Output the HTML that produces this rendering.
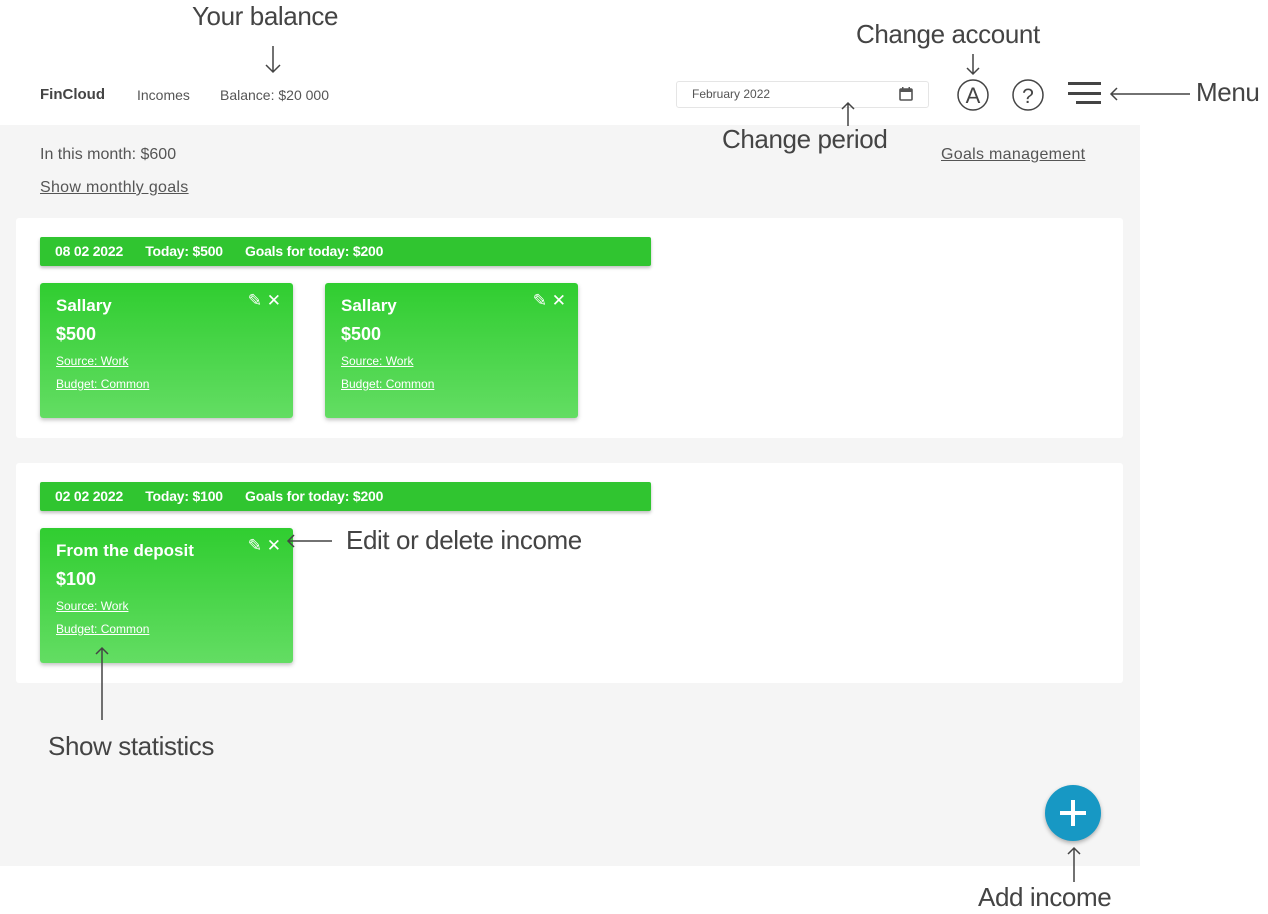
<!DOCTYPE html>
<html><head><style>
*{margin:0;padding:0;box-sizing:border-box}
body{width:1268px;height:914px;background:#fff;font-family:"Liberation Sans",sans-serif;color:#444;position:relative;overflow:hidden}
.a{position:absolute}
.gray{left:0;top:125px;width:1140px;height:741px;background:#f5f5f5}
.panel{background:#fff;left:16px;width:1107px;border-radius:3px}
.bar{left:40px;width:611px;height:29px;background:#30c530;border-radius:2px;box-shadow:0 2px 3px rgba(0,0,0,.25);color:#fff;font-weight:bold;font-size:14px;line-height:29px;padding-left:15px;white-space:pre;letter-spacing:-.2px}
.card{width:253px;height:135px;border-radius:3px;background:linear-gradient(#30cd30,#63dd63);box-shadow:0 2px 4px rgba(0,0,0,.25);color:#fff;padding:13px 16px}
.card .t{font-weight:bold;font-size:17px;height:28px}
.card .m{font-weight:bold;font-size:18px;height:30px}
.card .l{font-size:12px;text-decoration:underline;height:23px}
.ic{position:absolute;right:12px;top:8px;font-size:17px}
.ann{font-size:26px;color:#444;letter-spacing:-.4px}
.arr{stroke:#444;stroke-width:1.5;fill:none}
</style></head><body>
<div class="a gray"></div>
<div class="a" style="left:40px;top:86px;font-size:15px;font-weight:bold;color:#444">FinCloud</div>
<div class="a" style="left:137px;top:87px;font-size:14px;color:#555">Incomes</div>
<div class="a" style="left:220px;top:87px;font-size:14px;color:#555">Balance: $20 000</div>
<div class="a" style="left:676px;top:81px;width:253px;height:27px;border:1px solid #e5e5e5;border-radius:3px;font-size:12px;line-height:25px;padding-left:15px;color:#555">February 2022</div>
<svg class="a" style="left:898px;top:86px" width="16" height="16"><rect x="2" y="3" width="12" height="11" rx="1" fill="none" stroke="#555" stroke-width="1.6"/><rect x="2" y="3" width="12" height="3" fill="#555"/><rect x="4" y="1" width="1.5" height="3" fill="#555"/><rect x="10.5" y="1" width="1.5" height="3" fill="#555"/></svg>
<svg class="a" style="left:955px;top:77px" width="36" height="36"><circle cx="18" cy="18" r="15" fill="none" stroke="#444" stroke-width="1.5"/><text x="18" y="26" font-size="22" text-anchor="middle" fill="#444" font-family="Liberation Sans">A</text></svg>
<svg class="a" style="left:1010px;top:77px" width="36" height="36"><circle cx="18" cy="18" r="15" fill="none" stroke="#444" stroke-width="1.5"/><text x="18" y="26" font-size="21" text-anchor="middle" fill="#444" font-family="Liberation Sans">?</text></svg>
<div class="a" style="left:1068px;top:82px;width:33px;height:3px;background:#444"></div>
<div class="a" style="left:1068px;top:92px;width:33px;height:3px;background:#444"></div>
<div class="a" style="left:1076px;top:101px;width:25px;height:3px;background:#444"></div>
<div class="a" style="left:40px;top:146px;font-size:16px;color:#555">In this month: $600</div>
<div class="a" style="left:40px;top:179px;font-size:16px;color:#555;text-decoration:underline;letter-spacing:.3px">Show monthly goals</div>
<div class="a" style="left:941px;top:146px;font-size:16px;color:#555;text-decoration:underline;letter-spacing:.3px">Goals management</div>
<div class="a panel" style="top:218px;height:220px"></div>
<div class="a bar" style="top:237px">08 02 2022      Today: $500      Goals for today: $200</div>
<div class="a card" style="left:40px;top:283px"><div class="t">Sallary</div><div class="m">$500</div><div class="l">Source: Work</div><div class="l">Budget: Common</div><div class="ic">✎ ✕</div></div>
<div class="a card" style="left:325px;top:283px"><div class="t">Sallary</div><div class="m">$500</div><div class="l">Source: Work</div><div class="l">Budget: Common</div><div class="ic">✎ ✕</div></div>
<div class="a panel" style="top:463px;height:220px"></div>
<div class="a bar" style="top:482px">02 02 2022      Today: $100      Goals for today: $200</div>
<div class="a card" style="left:40px;top:528px"><div class="t">From the deposit</div><div class="m">$100</div><div class="l">Source: Work</div><div class="l">Budget: Common</div><div class="ic">✎ ✕</div></div>
<div class="a" style="left:1045px;top:785px;width:56px;height:56px;border-radius:50%;background:#1798c4;box-shadow:0 2px 4px rgba(0,0,0,.3)"></div>
<div class="a" style="left:1060px;top:811px;width:26px;height:4px;background:#fff"></div>
<div class="a" style="left:1071px;top:800px;width:4px;height:26px;background:#fff"></div>
<div class="a ann" style="left:192px;top:1px">Your balance</div>
<div class="a ann" style="left:856px;top:19px">Change account</div>
<div class="a ann" style="left:722px;top:124px">Change period</div>
<div class="a ann" style="left:1196px;top:77px">Menu</div>
<div class="a ann" style="left:346px;top:525px">Edit or delete income</div>
<div class="a ann" style="left:48px;top:731px">Show statistics</div>
<div class="a ann" style="left:978px;top:882px">Add income</div>
<svg class="a" style="left:0;top:0" width="1268" height="914">
<path class="arr" d="M273 46V72M266 65l7 7 7-7"/>
<path class="arr" d="M973 54V74M967 68l6 6 6-6"/>
<path class="arr" d="M848 126V103M842 109l6-6 6 6"/>
<path class="arr" d="M1190 94H1111M1117 88l-6 6 6 6"/>
<path class="arr" d="M332 541H288M294 535l-6 6 6 6"/>
<path class="arr" d="M102 720V648M96 654l6-6 6 6"/>
<path class="arr" d="M1074 882V848M1068 854l6-6 6 6"/>
</svg>
</body></html>
